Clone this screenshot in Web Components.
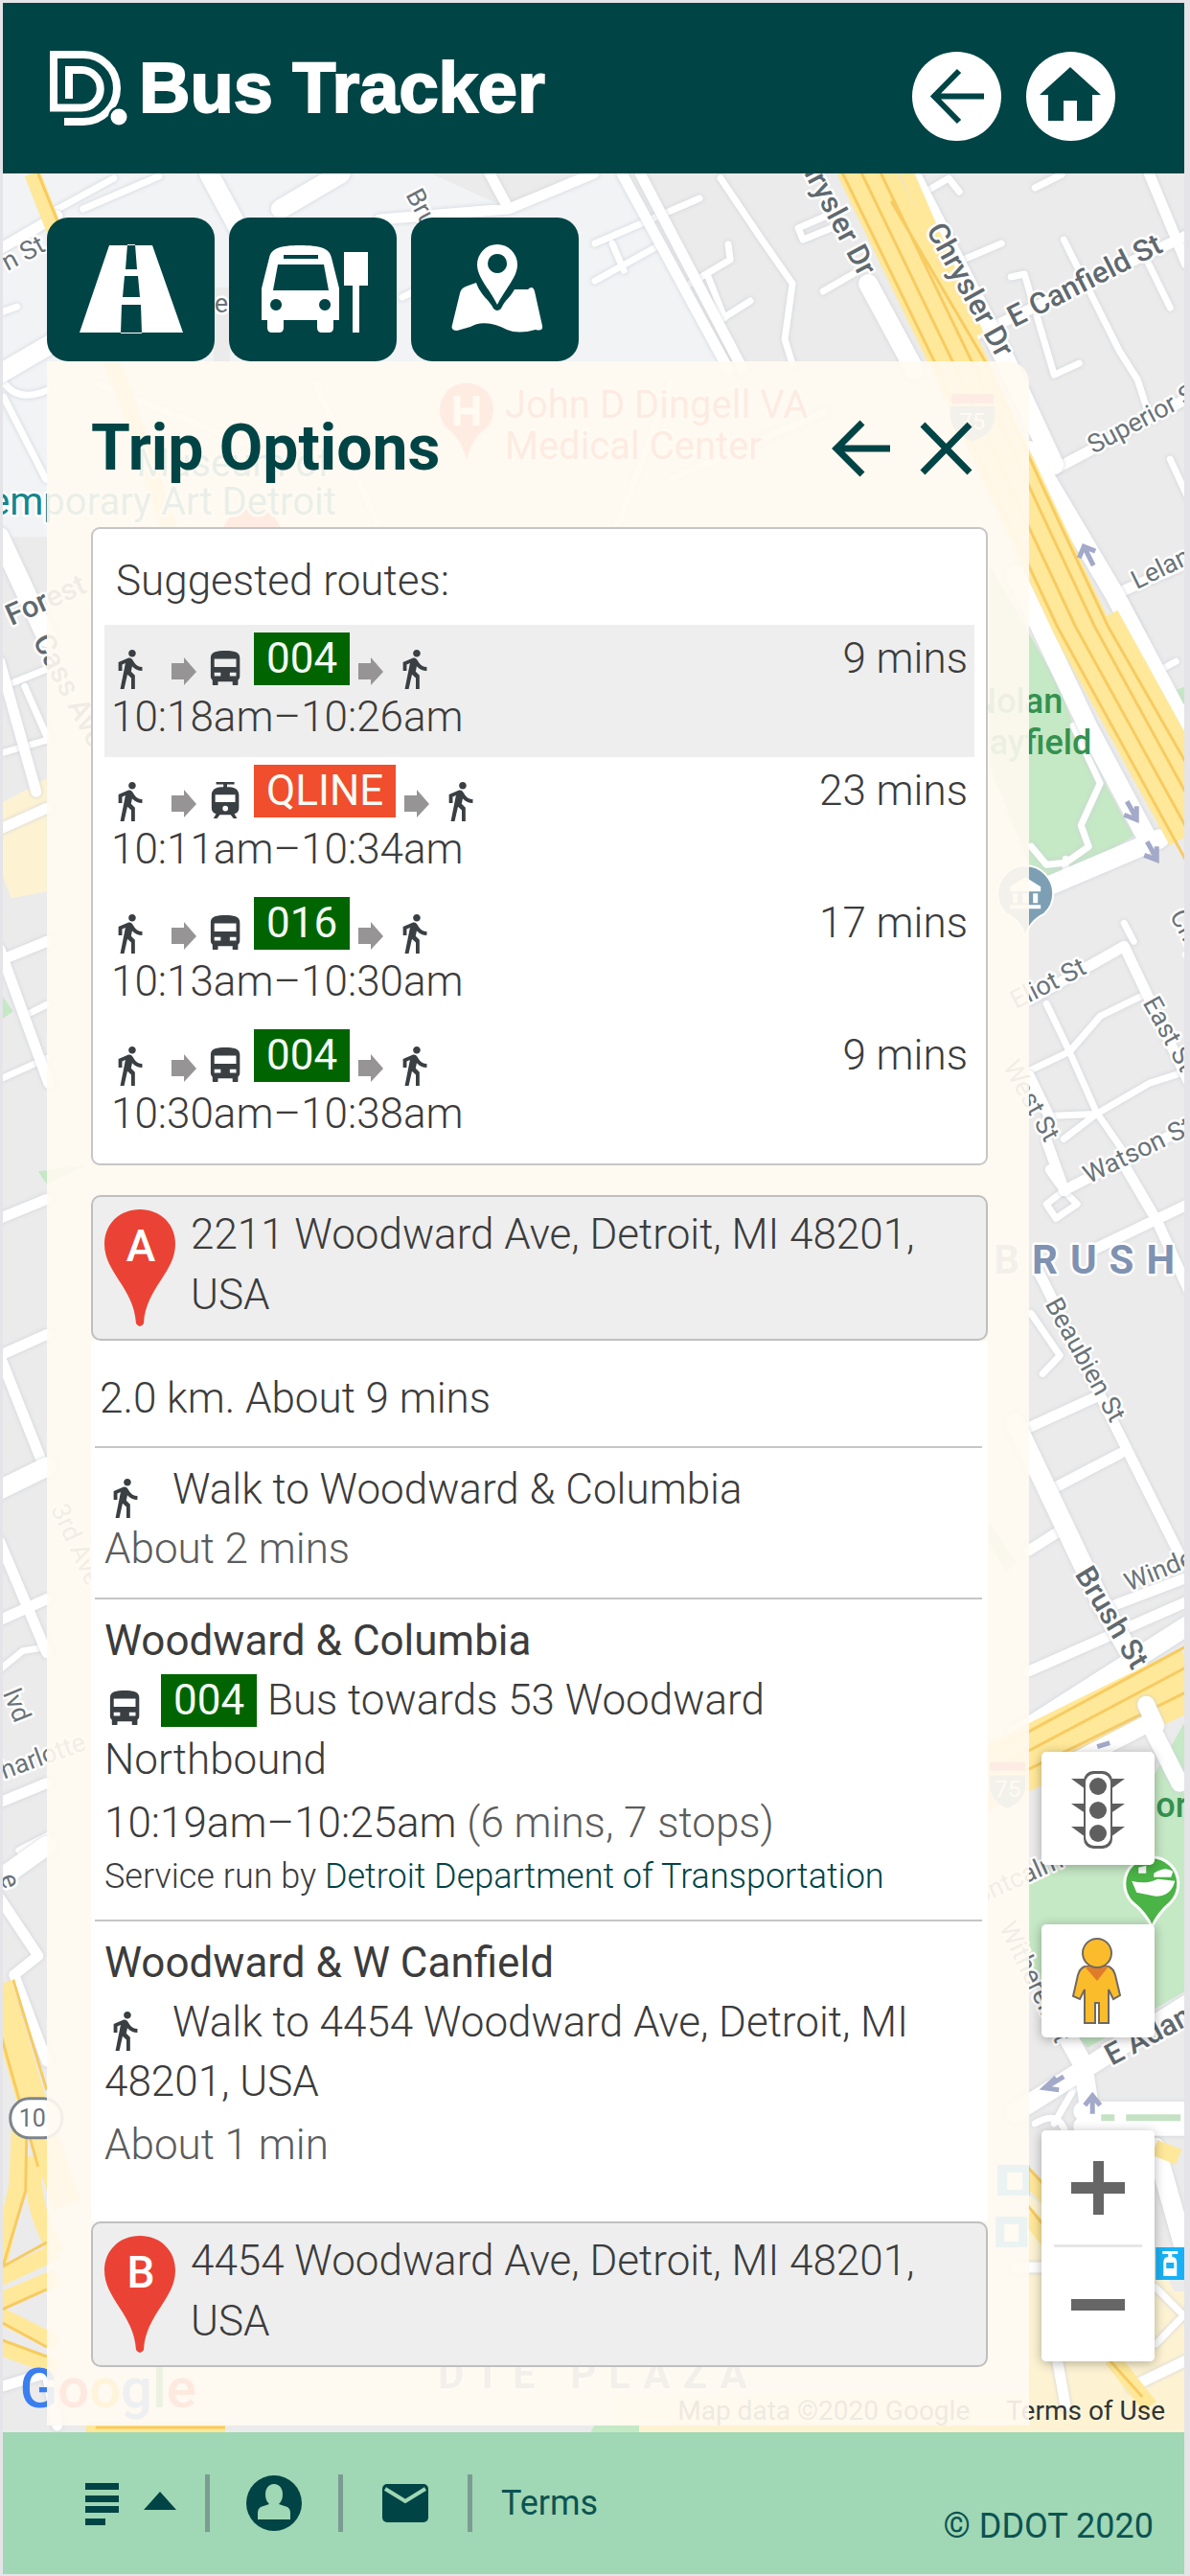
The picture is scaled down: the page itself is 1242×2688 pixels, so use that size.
<!DOCTYPE html>
<html lang="en">
<head>
<meta charset="utf-8">
<meta name="viewport" content="width=device-width, initial-scale=1">
<title>DDOT Bus Tracker</title>
<style>
    :root {
        --brand: #004445;
        --mint: #a0d7b4;
        --line: #c6c6c6;
    }
    body {
        margin: 0;
        font-family: Roboto, "Liberation Sans", sans-serif;
        font-size: 44px;
        color: #3c3c3c;
    }
</style>
</head>
<body>
<bus-tracker>
    <tracker-header slot="header">Bus Tracker</tracker-header>
    <city-map></city-map>
    <tool-bar></tool-bar>
    <trip-panel heading="Trip Options">
        <route-list heading="Suggested routes:">
            <route-option mode="bus" line="004" duration="9 mins" selected>10:18am–10:26am</route-option>
            <route-option mode="tram" line="QLINE" duration="23 mins">10:11am–10:34am</route-option>
            <route-option mode="bus" line="016" duration="17 mins">10:13am–10:30am</route-option>
            <route-option mode="bus" line="004" duration="9 mins">10:30am–10:38am</route-option>
        </route-list>
        <place-card letter="A">2211 Woodward Ave, Detroit, MI 48201, USA</place-card>
        <trip-steps></trip-steps>
        <place-card letter="B">4454 Woodward Ave, Detroit, MI 48201, USA</place-card>
    </trip-panel>
    <map-controls></map-controls>
    <tracker-footer slot="footer">© DDOT 2020</tracker-footer>
</bus-tracker>

<script>
const icons = {
    walk: {
        width: 42, viewBox: '2 1 22 22',
        body: '<path d="M13.500 5.500c1.100 0 2-.9 2-2s-.9-2-2-2-2 .9-2 2 .9 2 2 2zM9.800 8.900L7 23h2.100l1.800-8 2.100 2v6h2v-7.500l-2.100-2 .6-3C14.800 12 16.800 13 19 13v-2c-1.900 0-3.500-1-4.300-2.400l-1-1.600c-.4-.6-1-1-1.700-1-.3 0-.5.1-.8.1L6 8.300V13h2V9.600l1.800-.7"/>'
    },
    bus: {
        width: 38, viewBox: '3 1 20 22',
        body: '<path fill-rule="evenodd" d="M4 16c0 .9.4 1.700 1 2.200V20.500q0 .5.500.5H7.500q.5 0 .5-.5V19h8v1.500q0 .5.500.5H18.500q.5 0 .5-.5V18.200c.6-.5 1-1.300 1-2.200V6c0-3.500-3.600-4-8-4s-8 .5-8 4zM6 6.500h12v4.500H6zM6 14h3.500v2H6zM14.500 14H18v2h-3.500z"/>'
    },
    tram: {
        width: 38, viewBox: '3 1 20 22',
        body: '<path fill-rule="evenodd" d="M7 1.500h10v1.300h-4V4.200h1.500c3 .3 5 1.500 5 4.500V16c0 1.600-1 2.700-2.500 3l1.500 2.500h-2L15 19.500H9L7.500 21.500h-2L7 19c-1.500-.3-2.500-1.400-2.500-3V8.700c0-3 2-4.200 5-4.500H11V2.800H7zM6.500 8.500V12.500h11V8.500zM12 14.500a1.500 1.500 0 1 0 .1 3 1.500 1.500 0 0 0-.1-3z"/>'
    },
    next: {
        width: 30, viewBox: '0 0 30 42',
        body: '<path fill="#969494" d="M0 15h13V9L26 24 13 38V32H0z"/>'
    }
};

class TransitIcon extends HTMLElement {
    constructor() {
        super();
        this.attachShadow({ mode: 'open' });
    }

    connectedCallback() {
        const icon = icons[this.getAttribute('name')];

        this.shadowRoot.innerHTML = `
            <style>
                :host {
                    display: inline-block;
                    flex: none;
                    height: 42px;
                    width: ${icon.width}px;
                }
                svg {
                    display: block;
                    width: 100%;
                    height: 100%;
                    fill: #3a3f43;
                }
            </style>
            <svg viewBox="${icon.viewBox}" aria-hidden="true">${icon.body}</svg>
        `;
    }
}

class LineBadge extends HTMLElement {
    constructor() {
        super();
        this.attachShadow({ mode: 'open' });
        this.shadowRoot.innerHTML = `
            <style>
                :host {
                    display: inline-block;
                    padding: 0 13px;
                    line-height: 55px;
                    font-weight: 400;
                    color: #f4fbf4;
                    background: #006400;
                }
                :host([rail]) {
                    background: #f04e2c;
                }
            </style>
            <slot></slot>
        `;
    }
}

class BusTracker extends HTMLElement {
    constructor() {
        super();
        this.attachShadow({ mode: 'open' });
        this.shadowRoot.innerHTML = `
            <style>
                :host {
                    display: flex;
                    flex-direction: column;
                    box-sizing: border-box;
                    min-height: 100vh;
                    padding: 3px 6px 3px 3px;
                    background: #e5e4e8;
                }
                main {
                    position: relative;
                    flex: 1;
                    box-sizing: border-box;
                    padding: 46px 162px 7px 46px;
                    overflow: hidden;
                }
            </style>
            <slot name="header"></slot>
            <main><slot></slot></main>
            <slot name="footer"></slot>
        `;
    }
}

class TrackerHeader extends HTMLElement {
    constructor() {
        super();
        this.attachShadow({ mode: 'open' });
        this.shadowRoot.innerHTML = `
            <style>
                :host {
                    display: block;
                }
                header {
                    display: flex;
                    align-items: center;
                    box-sizing: border-box;
                    height: 178px;
                    padding: 0 72px 0 49px;
                    background: var(--brand);
                    color: #fff;
                }
                h1 {
                    flex: 1;
                    margin: 0 0 0 12px;
                    font: bold 74px/74px "Liberation Sans", Arial, sans-serif;
                    -webkit-text-stroke: 2px #fff;
                }
                nav {
                    display: flex;
                    gap: 26px;
                    margin-top: 16px;
                }
                button {
                    width: 93px;
                    height: 93px;
                    padding: 0;
                    border: 0;
                    border-radius: 50%;
                    background: #fff;
                }
                svg {
                    display: block;
                }
            </style>
            <header>
                <svg width="81" height="78" viewBox="0 0 81 78" aria-hidden="true">
                    <path fill="none" stroke="#fff" stroke-width="8" d="M20 50V20H33A19.500 19.500 0 0 1 33 59.500H4V4H35A34.700 34.700 0 0 1 35 74H15"/>
                    <circle cx="72" cy="69" r="11" fill="#004445"/>
                    <circle cx="72" cy="69" r="8.500" fill="#fff"/>
                </svg>
                <h1><slot></slot></h1>
                <nav>
                    <button aria-label="Back">
                        <svg width="93" height="93" fill="none" stroke="#004445" stroke-width="6">
                            <path d="M75 46.500H23M49 20L23 46.500 49 73"/>
                        </svg>
                    </button>
                    <button aria-label="Home">
                        <svg width="93" height="93" fill="#004445">
                            <path d="M46 16L78 45H69V72H53V51H39V72H23V45H14z"/>
                        </svg>
                    </button>
                </nav>
            </header>
        `;
    }
}

class ToolBar extends HTMLElement {
    constructor() {
        super();
        this.attachShadow({ mode: 'open' });
        this.shadowRoot.innerHTML = `
            <style>
                :host {
                    position: relative;
                    display: flex;
                    gap: 15px;
                }
                button {
                    width: 175px;
                    height: 150px;
                    padding: 0;
                    border: 0;
                    border-radius: 22px;
                    background: var(--brand);
                }
                svg {
                    display: block;
                    fill: #fff;
                    fill-rule: evenodd;
                }
            </style>
            <button aria-label="Routes">
                <svg width="175" height="150">
                    <path d="M65 29H110L142 120H34zM84 28L82 54H94L92 28zM81 61L79 83H97L95 61zM78 91L77 121H99L98 91z"/>
                </svg>
            </button>
            <button aria-label="Stops">
                <svg width="175" height="150">
                    <path d="M74 29C95 29 105 32 107 42L115 74V107H109V115Q109 120 104 120H97Q92 120 92 115V107H57V115Q57 120 52 120H45Q40 120 40 115V107H34V74L42 42C44 32 54 29 74 29zM57 39V43H93V39zM51 49L46 76H104L99 49zM49 85A6 6 0 1 0 49.100 85zM100 85A6 6 0 1 0 100.100 85z"/>
                    <path d="M120 36H145V71H136V120H129V71H120z"/>
                </svg>
            </button>
            <button aria-label="Plan a trip">
                <svg width="175" height="150">
                    <path d="M90 28A21 21 0 0 1 111 49C111 62 100 72 90 91C80 72 69 62 69 49A21 21 0 0 1 90 28zM90 38A10 10 0 1 0 90.100 38z"/>
                    <path d="M68 68C73 82 82 86 86 95Q90 99 94 95C98 86 103 84 108 75L122 75Q127 70 129 77L137 113Q138 119 130 117Q112 122 100 117Q76 105 62 114L48 118Q41 118 43 112L51 79Q52 74 57 72z"/>
                </svg>
            </button>
        `;
    }
}

class TripPanel extends HTMLElement {
    constructor() {
        super();
        this.attachShadow({ mode: 'open' });
    }

    connectedCallback() {
        this.shadowRoot.innerHTML = `
            <style>
                :host {
                    position: relative;
                    display: block;
                    padding: 0 43px 61px 46px;
                    border-top-right-radius: 22px;
                    background: rgba(255, 249, 241, .91);
                    font-weight: 300;
                }
                .title {
                    display: flex;
                    align-items: center;
                    height: 173px;
                    padding: 8px 14px 0 0;
                    box-sizing: border-box;
                }
                h2 {
                    flex: 1;
                    margin: 0;
                    font-size: 66px;
                    font-weight: 700;
                    color: var(--brand);
                }
                button {
                    padding: 0;
                    border: 0;
                    background: none;
                }
                button + button {
                    margin-left: 26px;
                }
                svg {
                    display: block;
                    fill: none;
                    stroke: var(--brand);
                    stroke-width: 7;
                }
            </style>
            <div class="title">
                <h2>${this.getAttribute('heading')}</h2>
                <button aria-label="Back">
                    <svg width="64" height="60"><path d="M62 30H8M33 3L6 30 33 57"/></svg>
                </button>
                <button aria-label="Close">
                    <svg width="60" height="60"><path d="M6 5L55 55M55 5L6 55"/></svg>
                </button>
            </div>
            <slot></slot>
        `;
    }
}

class RouteList extends HTMLElement {
    constructor() {
        super();
        this.attachShadow({ mode: 'open' });
    }

    connectedCallback() {
        this.shadowRoot.innerHTML = `
            <style>
                :host {
                    display: block;
                    margin-bottom: 31px;
                    padding: 0 12px 10px;
                    border: 2px solid var(--line);
                    border-radius: 9px;
                    background: #fff;
                }
                h3 {
                    height: 100px;
                    margin: 0;
                    padding: 0 12px;
                    font-size: 44px;
                    font-weight: 300;
                    line-height: 108px;
                }
            </style>
            <h3>${this.getAttribute('heading')}</h3>
            <slot></slot>
        `;
    }
}

class RouteOption extends HTMLElement {
    constructor() {
        super();
        this.attachShadow({ mode: 'open' });
    }

    connectedCallback() {
        const mode = this.getAttribute('mode');

        this.shadowRoot.innerHTML = `
            <style>
                :host {
                    display: block;
                }
                button {
                    display: block;
                    width: 100%;
                    padding: 8px 7px;
                    border: 0;
                    background: none;
                    color: inherit;
                    font: inherit;
                    text-align: left;
                }
                :host([selected]) button {
                    background: #eee;
                }
                .legs {
                    display: flex;
                    gap: 9px;
                    height: 55px;
                    line-height: 55px;
                }
                transit-icon {
                    margin-top: 17px;
                }
                transit-icon:first-child {
                    margin-right: 12px;
                }
                .duration {
                    margin-left: auto;
                }
                .time {
                    display: block;
                    line-height: 67px;
                }
            </style>
            <button>
                <span class="legs">
                    <transit-icon name="walk"></transit-icon>
                    <transit-icon name="next"></transit-icon>
                    <transit-icon name="${mode}"></transit-icon>
                    <line-badge ${mode === 'tram' ? 'rail' : ''}>${this.getAttribute('line')}</line-badge>
                    <transit-icon name="next"></transit-icon>
                    <transit-icon name="walk"></transit-icon>
                    <span class="duration">${this.getAttribute('duration')}</span>
                </span>
                <span class="time"><slot></slot></span>
            </button>
        `;
    }
}

class PlaceCard extends HTMLElement {
    constructor() {
        super();
        this.attachShadow({ mode: 'open' });
    }

    connectedCallback() {
        this.shadowRoot.innerHTML = `
            <style>
                :host {
                    display: flex;
                    gap: 16px;
                    padding: 8px 12px 13px;
                    border: 2px solid #bfbfbf;
                    border-radius: 10px;
                    background: #eee;
                    line-height: 63px;
                }
                svg {
                    flex: none;
                    margin-top: 5px;
                }
                text {
                    font: 500 46px Roboto, sans-serif;
                    fill: #fff;
                    text-anchor: middle;
                }
            </style>
            <svg width="74" height="122">
                <path fill="#ea4335" d="M37 0C58 0 74 15 74 36C74 66 43 82 41 119Q37 125 33 119C31 82 0 66 0 36C0 15 16 0 37 0z"/>
                <text x="38" y="54">${this.getAttribute('letter')}</text>
            </svg>
            <span><slot></slot></span>
        `;
    }
}

class TripSteps extends HTMLElement {
    constructor() {
        super();
        this.attachShadow({ mode: 'open' });
        this.shadowRoot.innerHTML = `
            <style>
                :host {
                    display: block;
                    padding: 0 6px 29px 4px;
                    background: #fff;
                    line-height: 62px;
                }
                p, h3 {
                    margin: 0;
                    font-size: 44px;
                }
                h3 {
                    font-weight: 400;
                }
                .summary {
                    padding: 29px 5px 19px;
                }
                section {
                    padding: 12px 10px 20px;
                    border-top: 2px solid var(--line);
                }
                .soft {
                    color: #5c5c5c;
                }
                .late {
                    margin-top: 4px;
                }
                .service {
                    font-size: 36px;
                    line-height: 50px;
                }
                a {
                    color: var(--brand);
                    text-decoration: none;
                }
                transit-icon {
                    vertical-align: -15px;
                }
                transit-icon[name=walk] {
                    margin: 0 27px 0 2px;
                }
                transit-icon[name=bus] {
                    margin: 0 17px 0 4px;
                }
            </style>
            <p class="summary">2.0 km. About 9 mins</p>
            <section>
                <p><transit-icon name="walk"></transit-icon>Walk to Woodward &amp; Columbia</p>
                <p class="soft">About 2 mins</p>
            </section>
            <section>
                <h3>Woodward &amp; Columbia</h3>
                <p><transit-icon name="bus"></transit-icon><line-badge>004</line-badge> Bus towards 53 Woodward Northbound</p>
                <p class="late">10:19am–10:25am <span class="soft">(6 mins, 7 stops)</span></p>
                <p class="service">Service run by <a href="#ddot">Detroit Department of Transportation</a></p>
            </section>
            <section>
                <h3>Woodward &amp; W Canfield</h3>
                <p><transit-icon name="walk"></transit-icon>Walk to 4454 Woodward Ave, Detroit, MI 48201, USA</p>
                <p class="soft late">About 1 min</p>
            </section>
        `;
    }
}

class MapControls extends HTMLElement {
    constructor() {
        super();
        this.attachShadow({ mode: 'open' });
        this.shadowRoot.innerHTML = `
            <style>
                :host {
                    position: absolute;
                    right: 31px;
                    bottom: 74px;
                    width: 118px;
                }
                button {
                    display: block;
                    width: 118px;
                    height: 118px;
                    padding: 0;
                    border: 0;
                    border-radius: 5px;
                    background: #fff;
                    box-shadow: 0 2px 12px rgba(0, 0, 0, .3);
                }
                .traffic {
                    margin-bottom: 62px;
                }
                .person {
                    margin-bottom: 97px;
                }
                .zoom {
                    border-radius: 5px;
                    background: #fff;
                    box-shadow: 0 2px 12px rgba(0, 0, 0, .3);
                }
                .zoom button {
                    height: 119px;
                    box-shadow: none;
                }
                hr {
                    height: 3px;
                    margin: 0 13px;
                    border: 0;
                    background: #e6e6e6;
                }
                svg {
                    display: block;
                }
            </style>
            <button class="traffic" aria-label="Show traffic">
                <svg width="118" height="118" fill="#5f5f5f">
                    <path d="M31 28H50V42zM87 28H68V42zM31 54H50V67zM87 54H68V67zM31 78H50V92zM87 78H68V92z"/>
                    <rect x="44" y="20" width="30" height="81" rx="10"/>
                    <rect x="46" y="23" width="26" height="75" rx="9" fill="#fff"/>
                    <circle cx="59" cy="36" r="9"/>
                    <circle cx="59" cy="61" r="9"/>
                    <circle cx="59" cy="85" r="9"/>
                </svg>
            </button>
            <button class="person" aria-label="Street View">
                <svg width="118" height="118" fill="#fbbc2c" stroke="#6e6a62" stroke-width="2">
                    <path d="M45 44H70Q75 46 77 53L82 74 75 78 70 68V103H60V82H56V103H45V68L40 78 33 75 38 53Q40 46 45 44z"/>
                    <path fill="#e07b2c" stroke="none" d="M45 44H70L58 59z"/>
                    <circle cx="58" cy="30" r="15"/>
                </svg>
            </button>
            <div class="zoom">
                <button aria-label="Zoom in">
                    <svg width="118" height="119" fill="#666"><path d="M54 32H65V54H87V66H65V88H54V66H31V54H54z"/></svg>
                </button>
                <hr>
                <button aria-label="Zoom out">
                    <svg width="118" height="119" fill="#666"><path d="M31 54H87V66H31z"/></svg>
                </button>
            </div>
        `;
    }
}

class CityMap extends HTMLElement {
    constructor() {
        super();
        this.attachShadow({ mode: 'open' });
        this.shadowRoot.innerHTML = `
            <style>
                :host {
                    position: absolute;
                    inset: 0;
                    background: #ebebeb;
                }
                svg {
                    display: block;
                    width: 100%;
                    height: 100%;
                }
                .roads {
                    fill: none;
                    stroke: #fff;
                    stroke-linecap: round;
                    stroke-linejoin: round;
                    filter: drop-shadow(0 0 2px #ccd0d8);
                }
                .freeway, .freeway-line {
                    fill: none;
                    stroke: #ffe899;
                }
                .freeway-line {
                    stroke: #f7cb62;
                    stroke-width: 3;
                }
                text {
                    font: 400 27px Roboto, sans-serif;
                    fill: #6a7379;
                    stroke: #fff;
                    stroke-width: 5px;
                    stroke-linejoin: round;
                    paint-order: stroke;
                }
                .main {
                    font-size: 31px;
                    font-weight: 500;
                    fill: #5f696f;
                }
                .area {
                    font-size: 42px;
                    font-weight: 700;
                    fill: #7f92b2;
                    letter-spacing: 13px;
                }
                .park {
                    font-size: 36px;
                    font-weight: 500;
                    fill: #34914f;
                    stroke: none;
                }
                .hospital {
                    font-size: 40px;
                    fill: #e2574c;
                }
                .museum {
                    font-size: 40px;
                    fill: #12868f;
                }
                .shield {
                    font-size: 24px;
                    fill: #fff;
                    stroke: none;
                }
                .logo {
                    font: 500 58px Roboto, sans-serif;
                    stroke: none;
                }
                .arrows {
                    fill: none;
                    stroke: #a3a9c8;
                    stroke-width: 5;
                }
                .credit {
                    position: absolute;
                    right: 20px;
                    bottom: 5px;
                    display: flex;
                    gap: 38px;
                    font-size: 28px;
                    line-height: 34px;
                    color: #444;
                }
                a {
                    color: #333;
                    text-decoration: none;
                }
            </style>
            <svg viewBox="3 181 1233 2356" preserveAspectRatio="xMidYMid slice" aria-hidden="true">
                <path fill="#f1f3f5" d="M0 181H650L770 400 800 560H0z"/>
                <path fill="#ebebeb" d="M450 181H600L531 218zM223 300H240V380H223z"/>
                <path fill="#fdf3d3" d="M0 839L49 812V930L12 937 0 905zM1074 2390H1240V2540H640V2500H1074zM1074 2290L1088 2300V2390H1074zM1205 2350L1240 2420V2540H1205z"/>
                <path fill="#c5e8c5" d="M1033 590L1074 661 1106 718 1120 757 1183 872 1102 922 1080 917 1033 800zM1221 722L1240 715V735L1228 733zM0 1035L14 1055 0 1065zM40 1222L90 1215 49 1235zM1033 1590L1060 1630 1050 1640 1030 1605zM1240 1790L1205 1850 1074 1965V2065L1135 2136 1240 2075zM620 2530H667V2540H615z"/>

                <g class="roads" stroke-width="7">
                    <path d="M621 254L730 207M621 293L686 257M639 254L651 282M720 296L762 271 760 255M748 336L783 314M738 286L756 332M752 186L795 250 827 296 819 354 827 380M859 304L890 286M870 222L833 238 838 250 875 235M1080 196L1108 182M966 200L990 186 1001 200M1005 271L1045 254M1055 289L1069 286 1100 391 1126 379M1110 250L1168 366 1187 396 1197 427M1195 268L1221 321M1221 479L1240 520"/>
                    <path d="M1170 622L1191 660M1203 703L1227 690M1112 910V896M1120 757L1148 817 1128 861 1136 883 1112 900 1092 902 1076 883M1173 963L1183 982M1092 1047L1116 1097 1144 1160 1171 1199M1074 1117L1116 1097 1148 1060 1191 1039M1092 1164L1144 1162 1199 1130 1240 1117M1110 1188L1144 1162M1092 1256L1110 1242 1124 1256 1102 1271zM1076 1370L1106 1414 1088 1433"/>
                    <path d="M4 414L48 500M5 400Q20 420 50 407M4 325L18 320M87 218L166 184M55 221L119 186M420 310L440 300M4 716L49 698M26 716L49 768M4 785L49 772M31 1057L49 1048M2 1125L49 1104M2 1740L24 1722 49 1718M20 1930L49 1915"/>
                    <path d="M1100 2215L1127 2168M1080 2215Q1105 2200 1112 2225M1206 2386L1240 2420M1240 2410L1206 2445M100 400L300 480M330 400L400 560M640 560L700 400M700 500L860 430"/>
                </g>
                <g class="roads" stroke-width="11">
                    <path d="M649 181L760 385M668 181L775 385M396 229L531 218 620 181M511 181L531 218M1017 350L1240 245M1199 181L1238 275M1098 491L1240 415M1163 620L1240 587M1074 1043L1173 987 1240 1128M1074 1122L1095 1165M1092 1190L1110 1240M1110 1242L1240 1175M1096 1220L1112 1242M1170 1210L1207 1273 1240 1345M1144 1302L1240 1256M1084 1327L1168 1496 1235 1630M1074 1489L1144 1457M1100 1552L1169 1516M1074 1617L1104 1598M1148 1680L1240 1645M1074 1743L1240 1670"/>
                    <path d="M0 690L38 826M0 865L49 843M0 990L51 1130M0 1002L49 982M0 1271L49 1251M0 1414L49 1392M0 1414L44 1525M0 1608L49 1724M0 1690L49 1668M0 1880L49 1860M0 1980L40 2040 15 2060 49 2150M0 2490L49 2475 60 2530M0 260L60 225M1103 2460L1112 2510M1240 2461L1180 2490M1060 2365L1090 2365"/>
                </g>
                <g class="roads" stroke-width="20">
                    <path d="M950 181L1050 377 1100 485M1074 470L1163 620 1240 765M906 296L954 385M1060 600L1136 760 1200 880M1090 926L1210 875M218 181L250 240M293 218L356 181M0 390L60 355M0 560L49 665M0 1554L49 1530M1060 1485L1148 1670 1200 1762M1060 1810L1240 1695M1060 2203L1240 2090M1093 2086L1130 2153 1140 2220M1130 2202H1240M1130 2218H1240M1206 2240L1240 2360M0 1960L49 1925"/>
                </g>
                <path fill="none" stroke="#ffe899" stroke-width="17" d="M34 181L57 240 130 410 180 560M1072 2270L1100 2300M1072 2310L1100 2345M1160 2460L1200 2510M1205 2240L1230 2250M90 2536H235"/>
                <path class="freeway-line" d="M40 181L64 240M1072 2260L1095 2285M1072 2300L1100 2335M1158 2462L1192 2500M100 2532H235"/>

                <path class="freeway" stroke-width="58" d="M900 170L1000 377 1075 540 1128 653 1246 868"/>
                <path class="freeway" stroke="#fff0b3" stroke-width="14" d="M942 170L1020 350M1094 600L1175 780M1160 640L1240 785"/>
                <path class="freeway-line" d="M874 170L975 377 1050 540 1103 653 1240 902M894 170L994 377 1069 540 1122 653 1240 867M914 170L1014 377 1089 540 1142 653 1240 832M930 210L1028 377 1103 540 1156 653 1240 800"/>
                <path class="freeway" stroke-width="64" d="M1000 1868L1074 1833 1246 1748"/>
                <path class="freeway-line" d="M1000 1841L1074 1806 1240 1716M1000 1860L1074 1826 1240 1738M1060 1852L1130 1818 1240 1764"/>
                <g class="roads" stroke-width="18">
                    <path d="M1124 1836L1199 1797 1231 1860M1196 1778L1206 1800"/>
                </g>
                <path class="freeway" stroke-width="30" d="M-2 2070L30 2180 70 2300"/>
                <path class="freeway" stroke-width="17" d="M21 2215L18 2280 0 2360M36 2250Q30 2300 60 2350M60 2348L0 2376M60 2375L0 2400M0 2415L60 2445M0 2448L60 2470"/>
                <path class="freeway-line" d="M-8 2090L40 2260M14 2065L49 2180M49 2339L0 2366M49 2388L0 2410M3 2423L49 2448M0 2440L49 2458M28 2225L27 2285 3 2365"/>

                <path stroke="#c5e2c5" stroke-width="7" d="M1149 2209H1163M1175 2209H1232"/>
                <path class="arrows" d="M1141 590L1131 570M1126 582L1131 570 1143 575M1176 836L1186 854M1173 850L1186 855 1186 841M1197 878L1207 896M1194 892L1207 897 1207 883M1110 2166L1092 2177M1102 2167L1090 2178 1105 2180M1140 2205V2187M1132 2196L1140 2186 1148 2196M1145 1822L1158 1818"/>

                <text x="423" y="203" transform="rotate(62 423 203)">Brush St</text>
                <text x="8" y="283" transform="rotate(-28 8 283)">n St</text>
                <text x="224" y="326">e</text>
                <text class="main" text-anchor="end" x="897" y="290" transform="rotate(62 897 290)">Chrysler Dr</text>
                <text class="main" x="966" y="240" transform="rotate(61 966 240)">Chrysler Dr</text>
                <text class="main" x="1058" y="342" transform="rotate(-27 1058 342)">E Canfield St</text>
                <text x="1141" y="474" transform="rotate(-28 1141 474)">Superior St</text>
                <text x="1186" y="615" transform="rotate(-26 1186 615)">Leland St</text>
                <text x="1060" y="1053" transform="rotate(-27 1060 1053)">Eliot St</text>
                <text x="1192" y="1046" transform="rotate(61 1192 1046)">East St</text>
                <text x="1046" y="1112" transform="rotate(61 1046 1112)">West St</text>
                <text x="1220" y="955" transform="rotate(61 1220 955)">Chrysler</text>
                <text x="1136" y="1235" transform="rotate(-26 1136 1235)">Watson St</text>
                <text x="1090" y="1360" transform="rotate(61 1090 1360)">Beaubien St</text>
                <text class="main" x="1121" y="1642" transform="rotate(59 1121 1642)">Brush St</text>
                <text x="1178" y="1660" transform="rotate(-22 1178 1660)">Winder St</text>
                <text x="1000" y="1996" transform="rotate(-24 1000 1996)">Montcalm St</text>
                <text x="1042" y="2010" transform="rotate(64 1042 2010)">Witherell St</text>
                <text class="main" x="1160" y="2155" transform="rotate(-28 1160 2155)">E Adams Ave</text>
                <text class="main" x="12" y="653" transform="rotate(-24 12 653)">Forest</text>
                <text class="main" x="34" y="668" transform="rotate(62 34 668)">Cass Ave</text>
                <text x="53" y="1574" transform="rotate(65 53 1574)">3rd Ave</text>
                <text x="3" y="1766" transform="rotate(68 3 1766)">lvd</text>
                <text x="-12" y="1862" transform="rotate(-20 -12 1862)">Charlotte</text>
                <text x="0" y="1958" transform="rotate(70 0 1958)">e</text>
                <text class="area" x="1037" y="1329">BRUSH</text>
                <text class="area" x="457" y="2491">DTE PLAZA</text>
                <text class="park" text-anchor="end" x="1109" y="744">Nolan</text>
                <text class="park" text-anchor="end" x="1139" y="787">Playfield</text>
                <text class="park" x="1206" y="1895">or</text>
                <text class="hospital" x="527" y="436">John D Dingell VA</text>
                <text class="hospital" x="527" y="479">Medical Center</text>
                <path fill="#ef6a5f" d="M487 480Q482 458 466 446A28 28 0 1 1 508 446Q492 458 487 480z"/>
                <path stroke="#fff" stroke-width="7" d="M477 413V444M497 413V444M477 429H497"/>
                <circle cx="263" cy="562" r="32" fill="#ef6a5f"/>
                <text class="museum" text-anchor="end" x="345" y="497">Museum of</text>
                <text class="museum" text-anchor="end" x="351" y="537">Contemporary Art Detroit</text>

                <path fill="#7c9fb3" stroke="#fff" stroke-width="2" d="M1070 980Q1068 962 1050 953A29 29 0 1 1 1090 953Q1072 962 1070 980z"/>
                <path fill="#fff" d="M1054 925L1070 915 1086 925V930H1054zM1057 932H1062V942H1057zM1067 932H1073V942H1067zM1078 932H1083V942H1078zM1054 944H1086V948H1054z"/>
                <path fill="#4bb446" stroke="#fff" stroke-width="3" d="M1202 2010Q1196 1996 1181 1984A28 28 0 1 1 1222 1984Q1208 1996 1202 2010z"/>
                <path fill="#fff" d="M1181 1962Q1196 1966 1208 1960L1226 1962Q1222 1978 1206 1978L1186 1974zM1188 1948L1196 1946V1954H1188zM1204 1954Q1216 1946 1224 1952L1222 1958H1204z"/>
                <path fill="#7d9bb8" d="M992 424H1038V438Q1034 455 1015 460Q996 455 992 438zM1033 1852H1070V1866Q1067 1880 1051 1886Q1036 1880 1033 1866z"/>
                <path fill="#e06060" d="M993 411H1037V421H993zM1033 1838H1070V1847H1033z"/>
                <text class="shield" x="1001" y="448">75</text>
                <text class="shield" x="1038" y="1874">75</text>
                <path fill="#18b1f5" d="M1206 2344H1240V2378H1206zM1041 2258H1074V2290H1041zM1039 2312H1072V2344H1039z"/>
                <path fill="#fff" fill-rule="evenodd" d="M1213 2348H1229V2351H1223V2354Q1228 2354 1228 2360V2374H1214V2360Q1214 2354 1219 2354V2351H1213zM1217 2360V2366H1225V2360zM1051 2266H1067V2284H1051zM1048 2320H1063V2338H1048z"/>
                <rect x="11" y="2189" width="54" height="41" rx="20" fill="#fff" stroke="#7c858b" stroke-width="3"/>
                <text style="font-size: 25px; stroke: none" x="20" y="2218">10</text>

                <text class="logo" x="21" y="2511"><tspan fill="#3b7ef0">G</tspan><tspan fill="#ea4335">o</tspan><tspan fill="#fbbc05">o</tspan><tspan fill="#4285f4">g</tspan><tspan fill="#34a853">l</tspan><tspan fill="#ea4335">e</tspan></text>
            </svg>
            <div class="credit">
                <span>Map data ©2020 Google</span>
                <a href="#terms-of-use">Terms of Use</a>
            </div>
        `;
    }
}

class TrackerFooter extends HTMLElement {
    constructor() {
        super();
        this.attachShadow({ mode: 'open' });
        this.shadowRoot.innerHTML = `
            <style>
                :host {
                    display: block;
                }
                footer {
                    display: flex;
                    align-items: center;
                    gap: 30px;
                    box-sizing: border-box;
                    height: 148px;
                    padding: 0 32px 0 86px;
                    background: var(--mint);
                    color: #0b5353;
                    font-size: 36px;
                }
                button {
                    padding: 0;
                    border: 0;
                    background: none;
                }
                a {
                    color: inherit;
                    text-decoration: none;
                }
                i {
                    width: 5px;
                    height: 60px;
                    background: #7b9c92;
                }
                svg {
                    display: block;
                    fill: var(--brand);
                }
                .account {
                    padding: 0 8px;
                }
                .mail {
                    padding: 0 11px;
                }
                small {
                    align-self: flex-end;
                    margin-left: auto;
                    padding-bottom: 29px;
                    font-size: 36px;
                }
            </style>
            <footer>
                <button aria-label="Menu">
                    <svg width="95" height="60">
                        <path d="M0 9H35V16H0zM0 22H35V29H0zM0 33H35V40H0zM0 46H21V53H0zM61 37L78 18 95 37z"/>
                    </svg>
                </button>
                <i></i>
                <a class="account" href="#account" aria-label="Account">
                    <svg width="58" height="60">
                        <circle cx="29" cy="30" r="29"/>
                        <path fill="#a0d7b4" d="M29 10C35 10 38 15 38 21C38 26 36 29 34 31L43 34Q46 36 46 40V47H12V40Q12 36 15 34L24 31C22 29 20 26 20 21C20 15 23 10 29 10z"/>
                    </svg>
                </a>
                <i></i>
                <a class="mail" href="#contact" aria-label="Contact">
                    <svg width="48" height="40">
                        <rect width="48" height="40" rx="5"/>
                        <path fill="none" stroke="#a0d7b4" stroke-width="4" d="M3 5L24 18 45 5"/>
                    </svg>
                </a>
                <i></i>
                <a href="#terms">Terms</a>
                <small><slot></slot></small>
            </footer>
        `;
    }
}

customElements.define('transit-icon', TransitIcon);
customElements.define('line-badge', LineBadge);
customElements.define('bus-tracker', BusTracker);
customElements.define('tracker-header', TrackerHeader);
customElements.define('tool-bar', ToolBar);
customElements.define('trip-panel', TripPanel);
customElements.define('route-list', RouteList);
customElements.define('route-option', RouteOption);
customElements.define('place-card', PlaceCard);
customElements.define('trip-steps', TripSteps);
customElements.define('map-controls', MapControls);
customElements.define('city-map', CityMap);
customElements.define('tracker-footer', TrackerFooter);
</script>
</body>
</html>
